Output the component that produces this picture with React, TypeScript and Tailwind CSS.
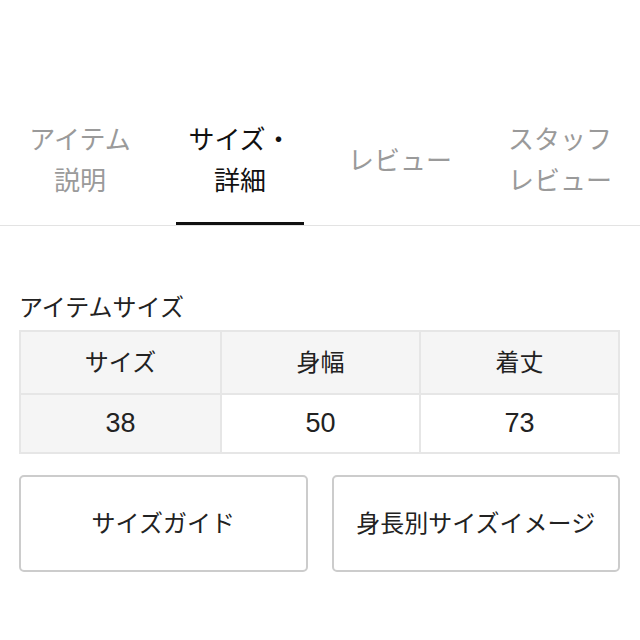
import React from "react";

const tabs = [
  { lines: ["アイテム", "説明"], active: false },
  { lines: ["サイズ・", "詳細"], active: true },
  { lines: ["レビュー"], active: false },
  { lines: ["スタッフ", "レビュー"], active: false },
];

export default function App() {
  return (
    <div className="w-[640px] h-[640px] bg-white font-['Liberation_Sans','Noto_Sans_CJK_JP',sans-serif] text-[#222] pt-[120px]">
      <div className="flex border-b border-[#e3e3e3]">
        {tabs.map((t, i) => (
          <div key={i} className="w-[160px] flex flex-col items-stretch">
            <div
              className={`h-[82px] flex flex-col items-center justify-center text-[26px] leading-[41px] ${
                t.active ? "text-[#111]" : "text-[#9a9a9a]"
              }`}
            >
              {t.lines.map((l, j) => (
                <div key={j}>{l}</div>
              ))}
            </div>
            <div className="h-[20px]" />
            <div className={`h-[3px] mx-[16px] ${t.active ? "bg-[#111]" : "bg-transparent"}`} />
          </div>
        ))}
      </div>

      <div className="pl-[19px] pr-[20px] pt-[64px]">
        <div className="text-[24px] leading-[36px] mb-[4px]">アイテムサイズ</div>
        <div className="border-2 border-[#e6e6e6] text-[24px]">
          <div className="grid grid-cols-3 h-[61px] bg-[#f5f5f5]">
            <div className="flex items-center justify-center">サイズ</div>
            <div className="flex items-center justify-center border-l-2 border-[#e6e6e6]">身幅</div>
            <div className="flex items-center justify-center border-l-2 border-[#e6e6e6]">着丈</div>
          </div>
          <div className="grid grid-cols-3 h-[59px] border-t-2 border-[#e6e6e6] text-[27px]">
            <div className="flex items-center justify-center bg-[#f5f5f5]">38</div>
            <div className="flex items-center justify-center border-l-2 border-[#e6e6e6]">50</div>
            <div className="flex items-center justify-center border-l-2 border-[#e6e6e6]">73</div>
          </div>
        </div>

        <div className="grid grid-cols-2 gap-[24px] mt-[21px]">
          <div className="h-[97px] border-2 border-[#cccccc] rounded-[5px] flex items-center justify-center text-[24px]">
            サイズガイド
          </div>
          <div className="h-[97px] border-2 border-[#cccccc] rounded-[5px] flex items-center justify-center text-[24px]">
            身長別サイズイメージ
          </div>
        </div>
      </div>
    </div>
  );
}
